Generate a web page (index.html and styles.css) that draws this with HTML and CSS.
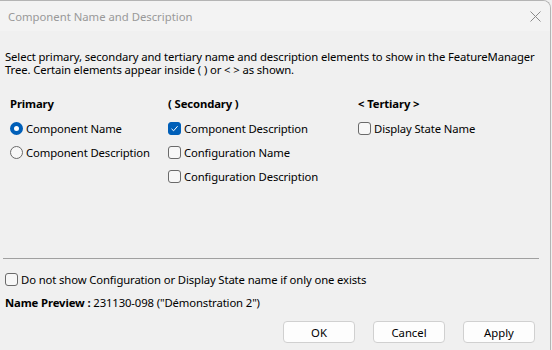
FILE: index.html
```html
<!DOCTYPE html>
<html lang="en">
<head>
  <meta charset="UTF-8" />
  <title>Component Name and Description</title>
  <link rel="stylesheet" href="styles.css">
</head>
<body>
  <div class="window">
    <div class="titlebar">
      <span class="title">Component Name and Description</span>
      <svg class="close" width="11" height="11" viewBox="0 0 11 11">
        <path d="M0.5 0.5 L10.5 10.5 M10.5 0.5 L0.5 10.5" stroke="#8a8a8a" stroke-width="1" fill="none"/>
      </svg>
    </div>

    <div class="content">
      <p class="intro">Select primary, secondary and tertiary name and description elements to show in the FeatureManager Tree. Certain elements appear inside ( ) or &lt; &gt; as shown.</p>

      <div class="columns">
        <div class="col col-primary">
          <div class="heading">Primary</div>
          <label class="row"><span class="radio checked"></span>Component Name</label>
          <label class="row"><span class="radio"></span>Component Description</label>
        </div>
        <div class="col col-secondary">
          <div class="heading">( Secondary )</div>
          <label class="row"><span class="check checked">
            <svg width="9" height="9" viewBox="0 0 9 9"><path d="M1.5 4.8 L3.6 6.8 L7.6 2.2" stroke="#fff" stroke-width="1" fill="none"/></svg>
          </span>Component Description</label>
          <label class="row"><span class="check"></span>Configuration Name</label>
          <label class="row"><span class="check"></span>Configuration Description</label>
        </div>
        <div class="col col-tertiary">
          <div class="heading">&lt; Tertiary &gt;</div>
          <label class="row"><span class="check"></span>Display State Name</label>
        </div>
      </div>

      <div class="separator"></div>

      <label class="row single"><span class="check"></span>Do not show Configuration or Display State name if only one exists</label>
      <div class="preview"><b>Name Preview :</b> 231130-098 ("Démonstration 2")</div>

      <div class="buttons">
        <button>OK</button>
        <button>Cancel</button>
        <button>Apply</button>
      </div>
    </div>
  </div>
</body>
</html>
```

FILE: styles.css
```css
* {
  box-sizing: border-box;
  margin: 0;
  padding: 0;
}

body {
  background-color: #f0f0f0;
  font-family: 'Noto Sans', 'Open Sans', sans-serif;
  font-size: 11.3px;
  letter-spacing: -0.12px;
  color: #000;
  width: 552px;
  height: 350px;
  overflow: hidden;
}

.window {
  width: 551px;
  height: 350px;
  background-color: #f0f0f0;
  border-top: 1px solid #b4b4b4;
  border-right: 1px solid #b4b4b4;
  border-top-right-radius: 8px;
  overflow: hidden;
}

.titlebar {
  height: 30px;
  background-color: #f3f3f3;
  display: flex;
  align-items: center;
  justify-content: space-between;
  padding: 0 9px 0 8px;
}

.title {
  color: #999;
  letter-spacing: 0;
}

.content {
  padding: 19px 0 0 5px;
}

.intro {
  line-height: 13px;
  width: 545px;
}

.columns {
  display: flex;
  margin-top: 21px;
  height: 161px;
}

.col-primary {
  width: 163px;
  padding-left: 5px;
}

.col-secondary {
  width: 190px;
}

.heading {
  font-weight: bold;
  height: 19px;
  line-height: 14px;
}

.row {
  display: flex;
  align-items: center;
  height: 24px;
  gap: 3px;
}

.radio {
  width: 13px;
  height: 13px;
  border: 1px solid #6a6a6a;
  border-radius: 50%;
  background-color: #f7f7f7;
}

.radio.checked {
  border: 4px solid #005fb8;
  background-color: #fff;
}

.check {
  width: 13px;
  height: 13px;
  border: 1px solid #6a6a6a;
  border-radius: 3px;
  background-color: #f7f7f7;
  display: flex;
  align-items: center;
  justify-content: center;
}

.check.checked {
  background-color: #005fb8;
  border-color: #005fb8;
}

.separator {
  height: 1px;
  background-color: #a0a0a0;
  width: 536px;
  margin-left: -2px;
}

.single {
  margin-top: 9px;
  height: 23px;
}

.preview {
  height: 24px;
  line-height: 24px;
}

.buttons {
  display: flex;
  justify-content: flex-end;
  gap: 18px;
  padding-right: 15px;
  margin-top: 6px;
}

button {
  width: 72px;
  height: 22px;
  font-family: inherit;
  font-size: 11.3px;
  background-color: #fdfdfd;
  border: 1px solid #d0d0d0;
  border-radius: 4px;
  color: #000;
}
```
